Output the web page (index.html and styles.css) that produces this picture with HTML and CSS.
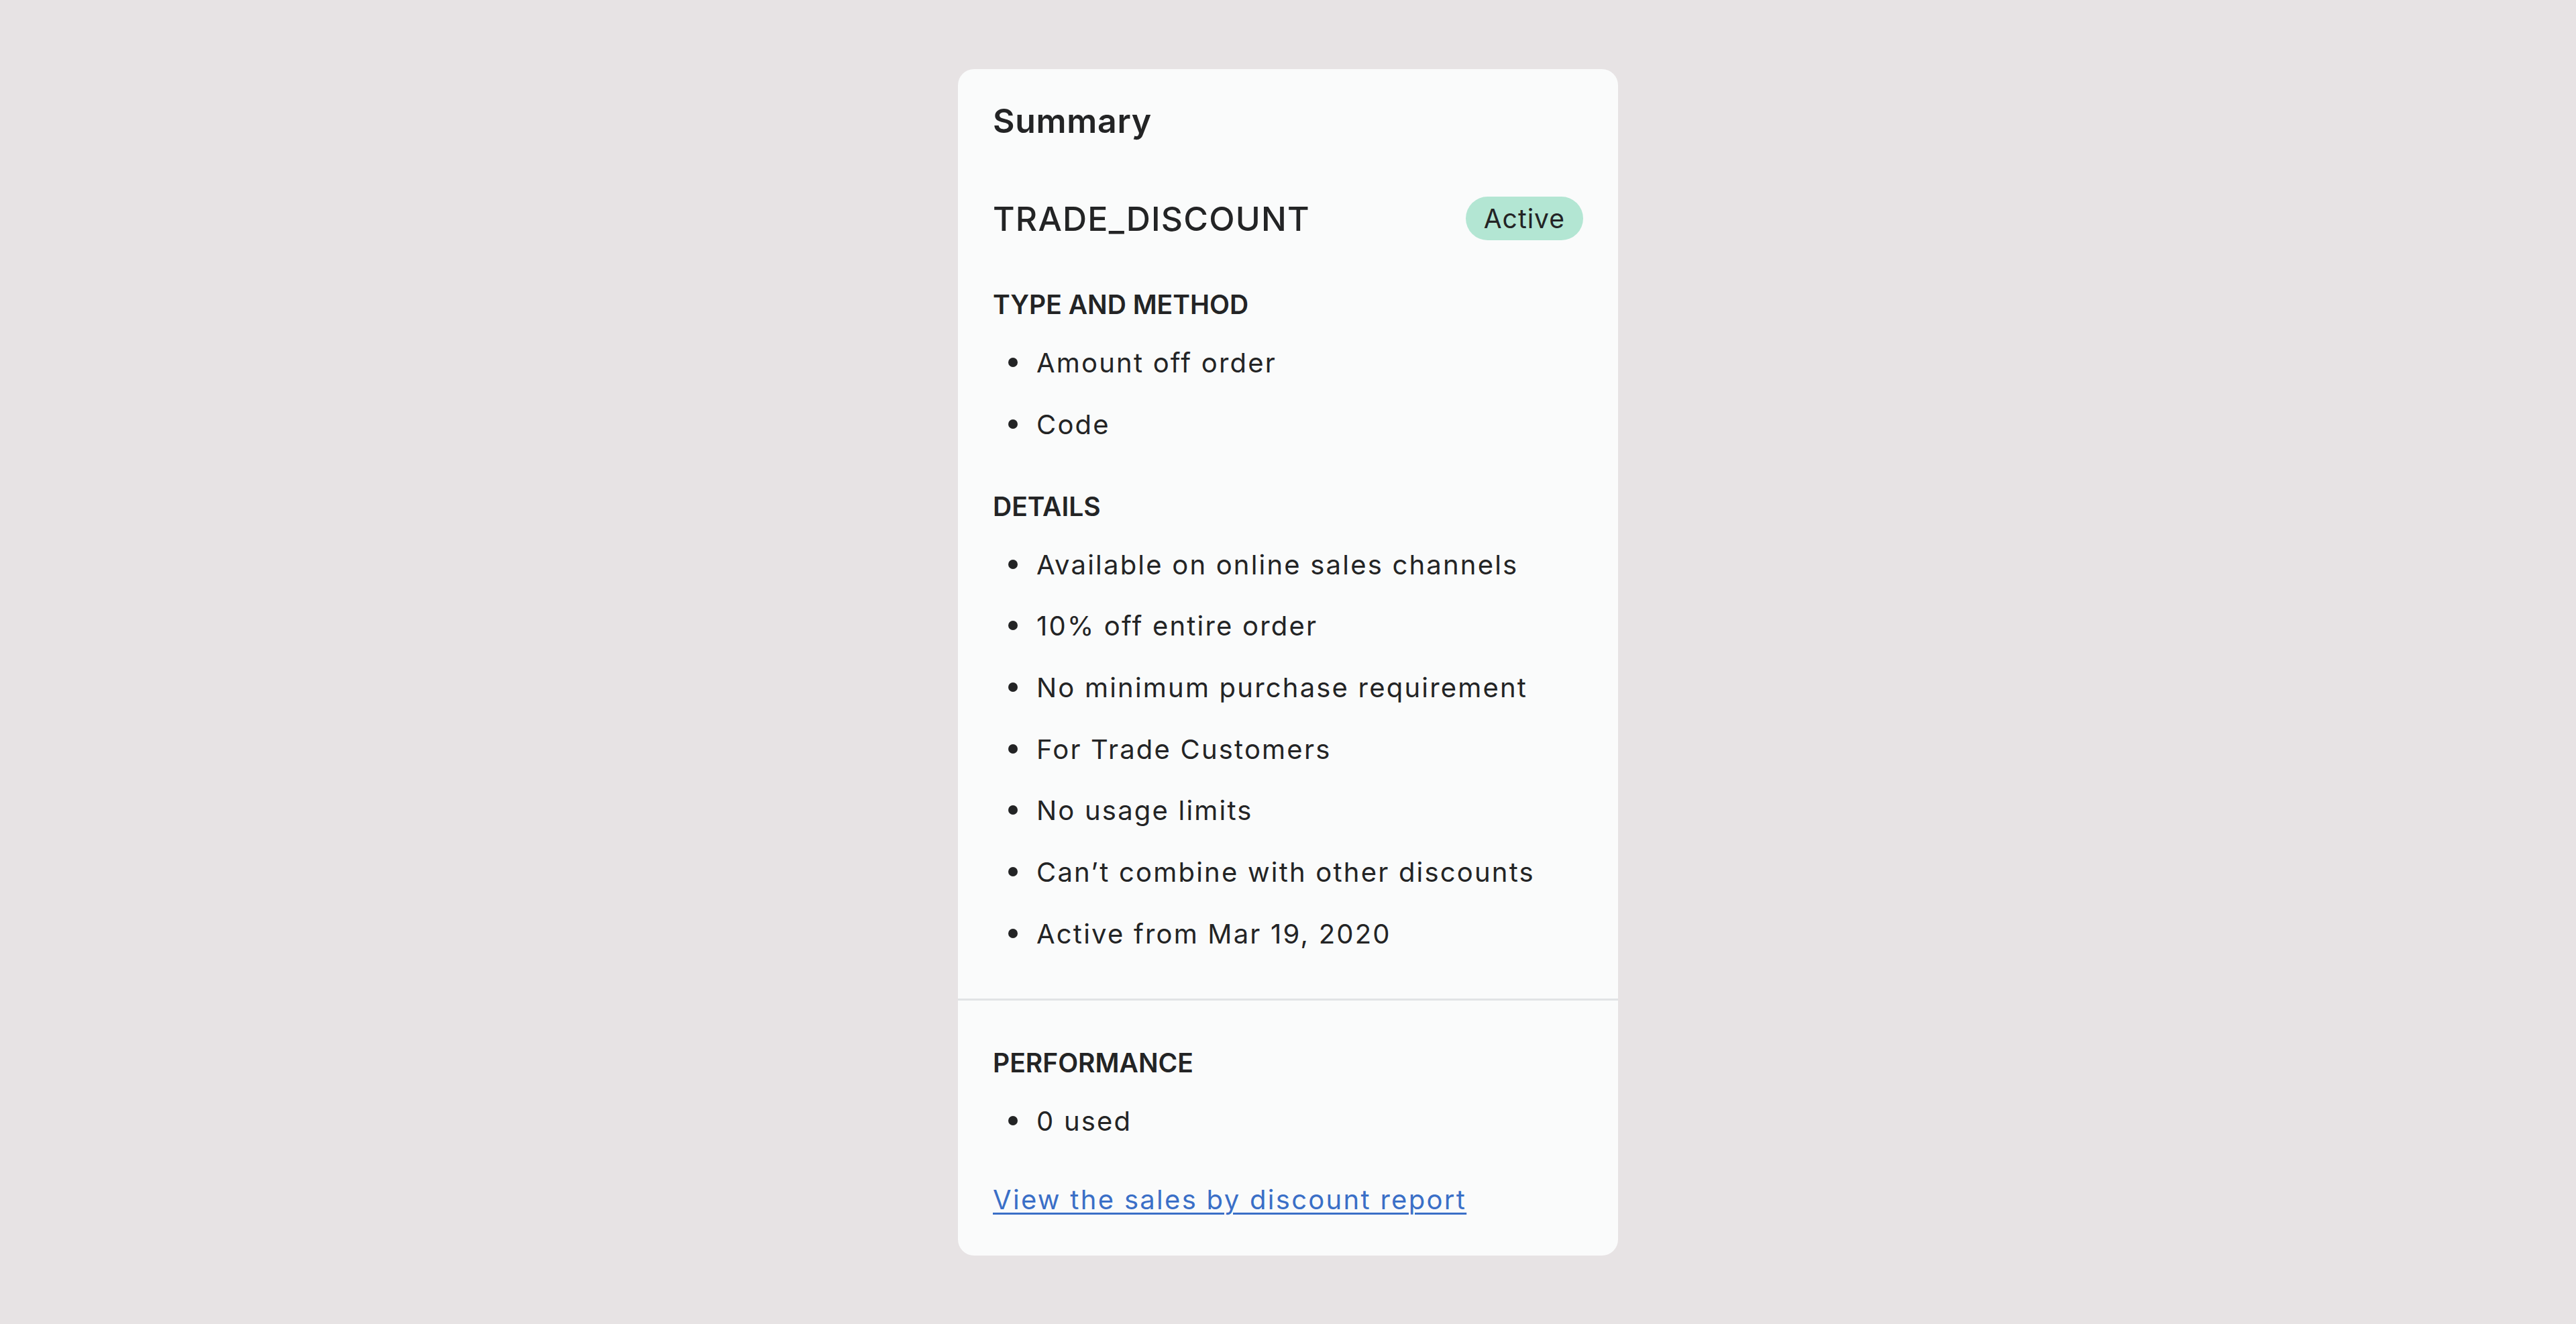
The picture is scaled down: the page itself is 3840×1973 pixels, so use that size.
FILE: index.html
```html
<!DOCTYPE html>
<html lang="en">
<head>
<meta charset="utf-8">
<title>Summary</title>
<link rel="stylesheet" href="styles.css">
</head>
<body>
<main class="page">
  <section class="card">
    <div class="card-section">
      <h2 class="card-title">Summary</h2>
      <div class="code-row">
        <h3 class="code-name">TRADE_DISCOUNT</h3>
        <span class="badge">Active</span>
      </div>
      <div class="group">
        <h4 class="subheading">TYPE AND METHOD</h4>
        <ul class="bullets">
          <li>Amount off order</li>
          <li>Code</li>
        </ul>
      </div>
      <div class="group group-details">
        <h4 class="subheading">DETAILS</h4>
        <ul class="bullets">
          <li>Available on online sales channels</li>
          <li>10% off entire order</li>
          <li>No minimum purchase requirement</li>
          <li>For Trade Customers</li>
          <li>No usage limits</li>
          <li>Can’t combine with other discounts</li>
          <li>Active from Mar 19, 2020</li>
        </ul>
      </div>
    </div>
    <div class="card-section card-section-bottom">
      <h4 class="subheading">PERFORMANCE</h4>
      <ul class="bullets">
        <li>0 used</li>
      </ul>
      <a class="report-link" href="#">View the sales by discount report</a>
    </div>
  </section>
</main>
</body>
</html>
```
FILE: styles.css
```css
html, body {
  margin: 0;
  padding: 0;
}

body {
  background: #e7e3e4;
  font-family: Inter, "Noto Sans", "Liberation Sans", sans-serif;
  color: #232425;
  min-height: 1973px;
}

.page {
  display: flex;
  justify-content: center;
  padding-top: 103px;
}

.card {
  width: 984px;
  height: 1768px;
  box-sizing: border-box;
  background: #fafbfb;
  border-radius: 24px;
  display: flex;
  flex-direction: column;
}

.card-section {
  padding: 41px 52px 66px 52px;
}

.card-section-bottom {
  border-top: 3px solid #e1e3e5;
  padding-top: 63px;
  padding-bottom: 0;
}

.card-title {
  margin: 0;
  font-size: 50px;
  line-height: 72px;
  font-weight: 600;
  letter-spacing: 0.7px;
}

.code-row {
  display: flex;
  justify-content: space-between;
  align-items: center;
  margin-top: 77px;
  height: 65px;
}

.code-name {
  margin: 0;
  font-size: 50px;
  line-height: 62px;
  font-weight: 500;
  letter-spacing: 1.2px;
}

.badge {
  display: inline-block;
  height: 65px;
  line-height: 65px;
  padding: 0 27px;
  border-radius: 33px;
  background: #b3e6d3;
  font-size: 39px;
  font-weight: 400;
  letter-spacing: 1px;
  color: #232425;
}

.group {
  margin-top: 66px;
}

.group-details {
  margin-top: 62px;
}

.subheading {
  margin: 0;
  font-size: 39px;
  line-height: 60px;
  font-weight: 600;
  text-transform: uppercase;
}

.bullets {
  list-style: none;
  margin: 27px 0 0 0;
  padding: 0;
  display: flex;
  flex-direction: column;
  gap: 31.7px;
}

.bullets li {
  display: flex;
  align-items: flex-start;
  font-size: 40px;
  line-height: 60px;
  letter-spacing: 2.2px;
}

.bullets li::before {
  content: "";
  flex: 0 0 14px;
  width: 14px;
  height: 14px;
  border-radius: 50%;
  background: #232425;
  margin: 22px 28px 0 23px;
}

.report-link {
  display: inline-block;
  margin-top: 57px;
  font-size: 40px;
  line-height: 60px;
  letter-spacing: 2.3px;
  color: #3a6fc7;
  text-decoration: underline;
  text-decoration-thickness: 3px;
  text-underline-offset: 5px;
}
```
